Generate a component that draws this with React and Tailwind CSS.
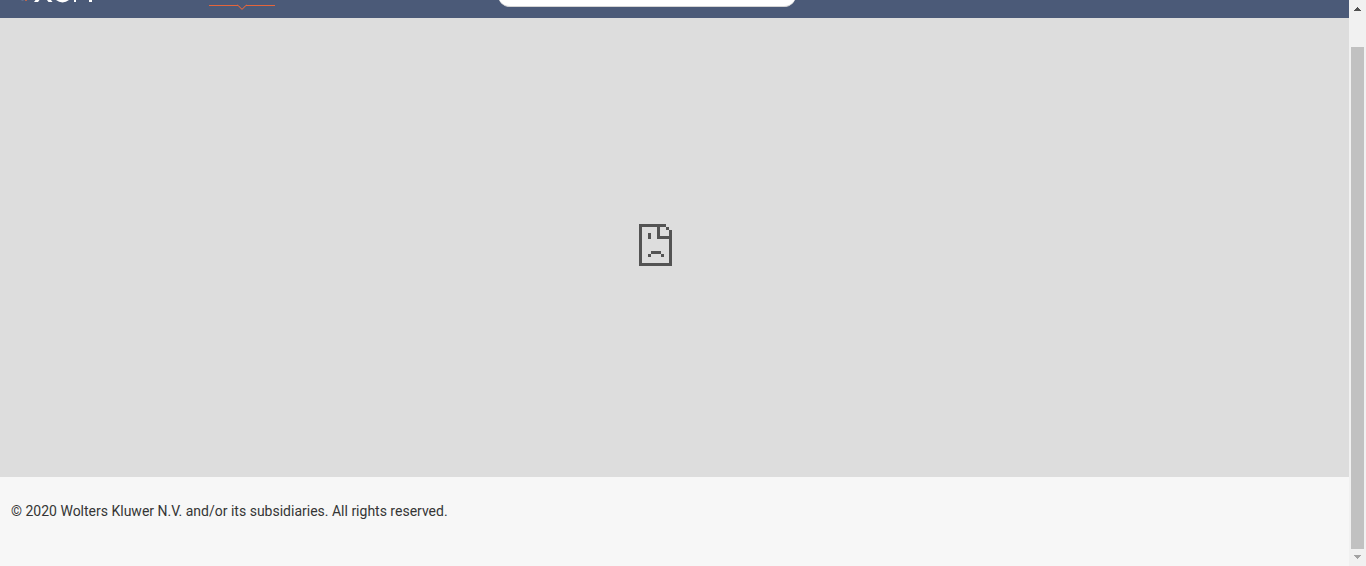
function Logo() {
  return (
    <a href="#home" aria-label="Home" className="ml-5 block h-2 w-20 self-start">
      <svg width="80" height="8" viewBox="0 0 80 8" aria-hidden="true">
        <path d="M1 0H3L4 1H2Z" fill="#62708d" />
        <path d="M5 0H7V1H5Z" fill="#b8664f" />
        <path d="M15.5 0H19.5L18 2H14Z" fill="#fff" />
        <path d="M27 0H31L32.5 2H28.5Z" fill="#fff" />
        <path d="M36 0H49Q46 2.4 42.5 2.4T36 0Z" fill="#fff" />
        <path d="M54 0H56V2H54ZM69 0H72V2H69Z" fill="#fff" />
      </svg>
    </a>
  );
}

function Header() {
  return (
    <header className="flex h-[18px] items-end overflow-hidden bg-[#4b5a78]">
      <Logo />
      <svg className="ml-[109px] self-start" width="66" height="12" viewBox="0 0 66 12" fill="none" aria-hidden="true">
        <path d="M0 5.5H29L33 9.5L37 5.5H66" stroke="#e5653b" />
        <path d="M28.5 4.5L33 9L37.5 4.5" stroke="#e5653b" strokeOpacity="0.5" />
      </svg>
      <input
        type="search"
        aria-label="Search"
        className="mb-[11px] ml-[223px] h-8 w-[298px] shrink-0 rounded-xl border-b border-[#d5d5d5] bg-white px-4 outline-none"
      />
    </header>
  );
}

function SadPage() {
  return (
    <svg width="33" height="42" viewBox="0 0 33 42" fill="#535353" shapeRendering="crispEdges" role="img" aria-label="Page failed to load">
      <path d="M0 0H27V3H3V39H30V15H18V3H21V12H30V6H33V42H0Z" />
      <path d="M27 3H30V6H27ZM9 9H12V15H9ZM12 27H22V30H12ZM9 30H12V33H9ZM22 30H25V33H22Z" />
    </svg>
  );
}

function ScrollBar() {
  return (
    <div className="flex w-[17px] shrink-0 flex-col items-center bg-[#f1f1f1]" aria-hidden="true">
      <svg width="17" height="17" viewBox="0 0 17 17" fill="#505050" shapeRendering="crispEdges">
        <path d="M8 7H9V8H10V9H11V10H12V11H5V10H6V9H7V8H8Z" />
      </svg>
      <div className="mt-[30px] w-[13px] grow bg-[#c1c1c1]" />
      <svg width="17" height="17" viewBox="0 0 17 17" fill="#a3a3a3" shapeRendering="crispEdges">
        <path d="M5 6H12V7H11V8H10V9H9V10H8V9H7V8H6V7H5Z" />
      </svg>
    </div>
  );
}

export default function App() {
  return (
    <div className="flex min-h-screen bg-[#f7f7f7]">
      <div className="flex min-w-0 grow flex-col">
        <Header />
        <main className="flex grow items-center justify-center bg-[#dddddd] pr-[38px] pb-[6px]">
          <SadPage />
        </main>
        <footer className="h-[89px] px-[11px] pt-6 font-[Roboto,sans-serif] text-sm leading-5 text-[#353535]">
          © 2020 Wolters Kluwer N.V. and/or its subsidiaries. All rights reserved.
        </footer>
      </div>
      <ScrollBar />
    </div>
  );
}
